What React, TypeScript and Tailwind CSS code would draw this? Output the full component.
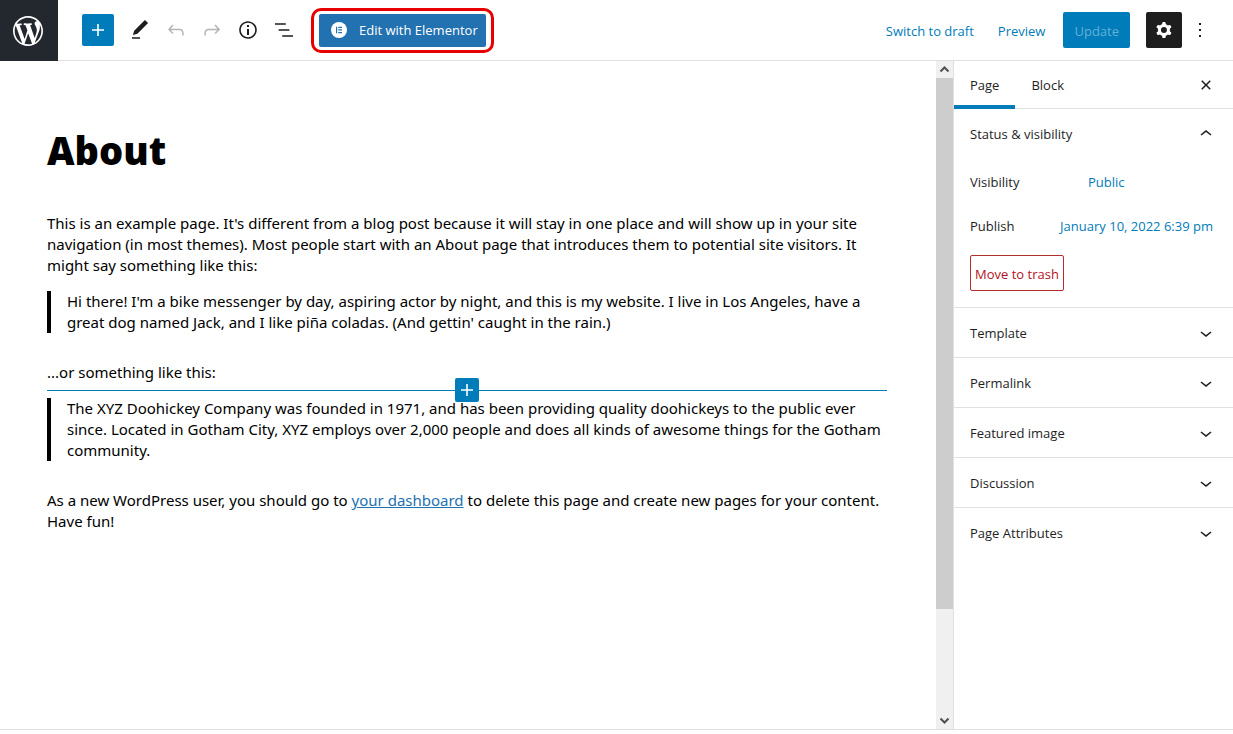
import { useState, type ReactNode } from "react";

const icons = {
  wordpress:
    "M20 10c0-5.51-4.49-10-10-10C4.48 0 0 4.49 0 10c0 5.52 4.48 10 10 10 5.51 0 10-4.48 10-10zM7.78 15.37L4.37 6.22c.55-.02 1.17-.08 1.17-.08.5-.06.44-1.13-.06-1.11 0 0-1.45.11-2.37.11-.18 0-.37 0-.58-.01C4.12 2.69 6.87 1.11 10 1.11c2.33 0 4.45.87 6.05 2.34-.68-.11-1.65.39-1.65 1.58 0 .74.45 1.36.9 2.1.35.61.55 1.36.55 2.46 0 1.49-1.4 5-1.4 5l-3.03-8.37c.54-.02.82-.17.82-.17.5-.05.44-1.25-.06-1.22 0 0-1.44.12-2.38.12-.87 0-2.33-.12-2.33-.12-.5-.03-.56 1.2-.06 1.22l.92.08 1.26 3.41zM17.41 10c.24-.64.74-1.87.43-4.25.7 1.29 1.05 2.71 1.05 4.25 0 3.29-1.73 6.24-4.4 7.78.97-2.59 1.94-5.2 2.92-7.78zM6.1 18.09C3.12 16.65 1.11 13.53 1.11 10c0-1.3.23-2.48.72-3.59C3.25 10.3 4.67 14.2 6.1 18.09zm4.03-6.63l2.58 6.98c-.86.29-1.76.45-2.71.45-.79 0-1.57-.11-2.29-.33.81-2.38 1.62-4.74 2.42-7.1z",
  plus: "M18 11.2h-5.2V6h-1.6v5.2H6v1.6h5.2V18h1.6v-5.2H18z",
  edit: "M20.1 5.1L16.9 2 6.2 12.7l-1.3 4.4 4.5-1.3L20.1 5.1zM4 20.8h8v-1.5H4v1.5z",
  undo: "M18.3 11.7c-.6-.6-1.4-.9-2.3-.9H6.7l2.9-3.3-1.1-1-4.5 5L8.5 16l1-1-2.7-2.7H16c.5 0 .9.2 1.3.5 1 1 1 3.4 1 4.5v.3h1.5v-.2c0-1.5 0-4.3-1.5-5.7z",
  redo: "M15.6 6.5l-1.1 1 2.9 3.3H8c-.9 0-1.7.3-2.3.9-1.4 1.5-1.4 4.2-1.4 5.6v.2h1.5v-.3c0-1.1 0-3.5 1-4.5.3-.3.7-.5 1.3-.5h9.2L14.5 15l1.1 1.1 4.6-4.6-4.6-5z",
  info: "M12 3.2c-4.8 0-8.8 3.9-8.8 8.8 0 4.8 3.9 8.8 8.8 8.8 4.8 0 8.8-3.9 8.8-8.8 0-4.8-4-8.8-8.8-8.8zm0 16c-4 0-7.2-3.3-7.2-7.2C4.8 8 8 4.8 12 4.8s7.2 3.3 7.2 7.2c0 4-3.2 7.2-7.2 7.2zM11 17h2v-6h-2v6zm0-8h2V7h-2v2z",
  list: "M13.8 5.2H3v1.5h10.8V5.2zm-3.6 12v1.5H21v-1.5H10.2zm7.2-6H6.6v1.5h10.8v-1.5z",
  cog: "M10.289 4.836A1 1 0 0111.275 4h1.306a1 1 0 01.987.836l.244 1.466c.787.26 1.503.679 2.108 1.218l1.393-.522a1 1 0 011.216.437l.653 1.13a1 1 0 01-.23 1.273l-1.148.944a6.025 6.025 0 010 2.435l1.149.946a1 1 0 01.23 1.272l-.653 1.13a1 1 0 01-1.216.437l-1.394-.522c-.605.54-1.32.958-2.108 1.218l-.244 1.466a1 1 0 01-.987.836h-1.306a1 1 0 01-.986-.836l-.244-1.466a5.995 5.995 0 01-2.108-1.218l-1.394.522a1 1 0 01-1.217-.436l-.653-1.131a1 1 0 01.23-1.272l1.149-.946a6.026 6.026 0 010-2.435l-1.148-.944a1 1 0 01-.23-1.272l.653-1.131a1 1 0 011.217-.437l1.393.522a5.994 5.994 0 012.108-1.218l.244-1.466zM14.929 12a3 3 0 11-6 0 3 3 0 016 0z",
  more: "M13 19h-2v-2h2v2zm0-6h-2v-2h2v2zm0-6h-2V5h2v2z",
  close:
    "M12 13.06l3.712 3.713 1.061-1.06L13.061 12l3.712-3.712-1.06-1.06L12 10.938 8.288 7.227l-1.061 1.06L10.939 12l-3.712 3.712 1.06 1.061L12 13.061z",
  down: "M17.5 11.6L12 16l-5.5-4.4.9-1.2L12 14l4.5-3.6 1 1.2z",
  up: "M6.5 12.4L12 8l5.5 4.4-.9 1.2L12 10l-4.5 3.6-1-1.2z",
};

function Icon({ name, className = "size-6", viewBox = "0 0 24 24" }: { name: keyof typeof icons; className?: string; viewBox?: string }) {
  return (
    <svg viewBox={viewBox} className={className} fill="currentColor" fillRule="evenodd" aria-hidden="true">
      <path d={icons[name]} />
    </svg>
  );
}

function ToolButton({ name, label, disabled }: { name: keyof typeof icons; label: string; disabled?: boolean }) {
  return (
    <button aria-label={label} disabled={disabled} className="flex size-9 items-center justify-center disabled:text-[#b5b5b5]">
      <Icon name={name} />
    </button>
  );
}

function Panel({ title, initialOpen = false, children }: { title: string; initialOpen?: boolean; children?: ReactNode }) {
  const [open, setOpen] = useState(initialOpen);

  return (
    <section className="border-b border-[#e0e0e0] last:border-b-0">
      <h2>
        <button aria-expanded={open} onClick={() => setOpen(!open)} className="flex h-[49px] w-full items-center justify-between pr-[15px] pl-4 text-left">
          {title}
          <Icon name={open ? "up" : "down"} />
        </button>
      </h2>
      {open ? children : null}
    </section>
  );
}

function Header() {
  return (
    <header className="flex h-[61px]">
      <a href="#pages" aria-label="View pages" className="flex w-[58px] shrink-0 items-center justify-center bg-[#23282e] pr-0.5 text-white">
        <Icon name="wordpress" viewBox="-2 -2 24 24" className="size-9" />
      </a>
      <div className="flex flex-1 items-center justify-between border-b border-[#e0e0e0] pr-[15px] pl-6">
        <div className="flex items-center">
          <button aria-label="Add block" className="mr-2 flex size-8 items-center justify-center rounded-xs bg-[#007cba] text-white">
            <Icon name="plus" />
          </button>
          <ToolButton name="edit" label="Tools" />
          <ToolButton name="undo" label="Undo" disabled />
          <ToolButton name="redo" label="Redo" disabled />
          <ToolButton name="info" label="Details" />
          <ToolButton name="list" label="List view" />
          <div className="ml-[9px] rounded-[10px] border-3 border-[#e60000] px-[5px] py-[3px]">
            <button className="flex h-[33px] items-center rounded-xs bg-[#2271b1] pr-2 pl-3 text-white">
              <svg viewBox="0 0 16 16" className="mr-3 size-4" aria-hidden="true">
                <circle cx="8" cy="8" r="8" fill="#fff" />
                <path d="M5 4.7h1.2v6.6H5zM7.3 4.7H11v1.3H7.3zM7.3 7.3H11v1.3H7.3zM7.3 10H11v1.3H7.3z" fill="#2271b1" />
              </svg>
              Edit with Elementor
            </button>
          </div>
        </div>
        <div className="flex items-center">
          <button className="px-3 pt-0.5 text-[#007cba]">Switch to draft</button>
          <button className="px-3 pt-0.5 text-[#007cba]">Preview</button>
          <button disabled className="ml-1.5 h-9 rounded-xs bg-[#007cba] px-[11px] pt-0.5 text-[#66b0d6]">
            Update
          </button>
          <button aria-label="Settings" className="ml-4 flex size-9 items-center justify-center rounded-xs bg-[#1e1e1e] text-white">
            <Icon name="cog" />
          </button>
          <button aria-label="Options" className="flex size-9 items-center justify-center">
            <Icon name="more" />
          </button>
        </div>
      </div>
    </header>
  );
}

function Editor() {
  return (
    <main className="min-w-0 flex-1 pt-16 pr-12 pl-[47px] font-['Noto_Sans',sans-serif] text-black">
      <div className="max-w-[840px] text-[15px] leading-[21px]">
        <h1 className="text-[38px] leading-[50px] font-black">About</h1>
        <p className="mt-[38px]">
          This is an example page. It's different from a blog post because it will stay in one place and will show up in your site navigation (in most
          themes). Most people start with an About page that introduces them to potential site visitors. It might say something like this:
        </p>
        <blockquote className="mt-[15px] border-l-4 border-black pl-4">
          Hi there! I'm a bike messenger by day, aspiring actor by night, and this is my website. I live in Los Angeles, have a great dog named Jack,
          and I like piña coladas. (And gettin' caught in the rain.)
        </blockquote>
        <div className="relative mt-[29px] pb-[15px]">
          <p>...or something like this:</p>
          {/* block inserter between the two blocks */}
          <div className="absolute inset-x-0 bottom-[7px] h-px bg-[#007cba]" />
          <button
            aria-label="Add block here"
            className="absolute -bottom-1 left-1/2 flex size-6 -translate-x-1/2 items-center justify-center rounded-xs bg-[#007cba] text-white"
          >
            <Icon name="plus" />
          </button>
        </div>
        <blockquote className="border-l-4 border-black pl-4">
          The XYZ Doohickey Company was founded in 1971, and has been providing quality doohickeys to the public ever since. Located in Gotham City,
          XYZ employs over 2,000 people and does all kinds of awesome things for the Gotham community.
        </blockquote>
        <p className="mt-[29px]">
          As a new WordPress user, you should go to{" "}
          <a href="#dashboard" className="text-[#2271b1] underline">
            your dashboard
          </a>{" "}
          to delete this page and create new pages for your content. Have fun!
        </p>
      </div>
    </main>
  );
}

function ScrollArrow({ up }: { up?: boolean }) {
  return (
    <svg viewBox="0 0 17 17" className="size-[17px] shrink-0" fill="none" stroke="#505050" strokeWidth="2" aria-hidden="true">
      <path d={up ? "M4.5 10.5l4-4 4 4" : "M4.5 6.5l4 4 4-4"} />
    </svg>
  );
}

function Scrollbar() {
  return (
    <div className="flex w-[17px] shrink-0 flex-col bg-[#f0f0f0]">
      <ScrollArrow up />
      <div className="flex-[531] bg-[#cdcdcd]" />
      <div className="flex-[103]" />
      <ScrollArrow />
    </div>
  );
}

function Sidebar() {
  const [tab, setTab] = useState("Page");

  return (
    <aside className="w-[280px] shrink-0 border-l border-[#e0e0e0]">
      <div className="flex h-12 items-stretch border-b border-[#e0e0e0]">
        {["Page", "Block"].map((name) => (
          <button
            key={name}
            onClick={() => setTab(name)}
            className={tab === name ? "-mb-px border-b-4 border-[#007cba] px-4 pt-1" : "px-4"}
          >
            {name}
          </button>
        ))}
        <button aria-label="Close settings" className="mr-[15px] ml-auto">
          <Icon name="close" />
        </button>
      </div>
      <Panel title="Status & visibility" initialOpen>
        <div className="px-4 pb-4">
          <div className="mt-1.5 flex h-9 items-center">
            <span className="w-[118px]">Visibility</span>
            <button className="text-[#007cba]">Public</button>
          </div>
          <div className="mt-2 flex h-9 items-center justify-between pr-1">
            <span>Publish</span>
            <button className="whitespace-nowrap text-[#007cba]">January 10, 2022 6:39 pm</button>
          </div>
          <button className="mt-[11px] h-9 rounded-xs border border-[#b32d2e] px-1 pt-0.5 text-[#b5121b]">Move to trash</button>
        </div>
      </Panel>
      <Panel title="Template" />
      <Panel title="Permalink" />
      <Panel title="Featured image" />
      <Panel title="Discussion" />
      <Panel title="Page Attributes" />
    </aside>
  );
}

export default function App() {
  return (
    <div className="flex min-h-screen flex-col bg-white pb-1 font-['Open_Sans',sans-serif] text-[13px] leading-5 text-[#1e1e1e]">
      <Header />
      <div className="flex flex-1 border-b border-[#e0e0e0]">
        <Editor />
        <Scrollbar />
        <Sidebar />
      </div>
    </div>
  );
}
